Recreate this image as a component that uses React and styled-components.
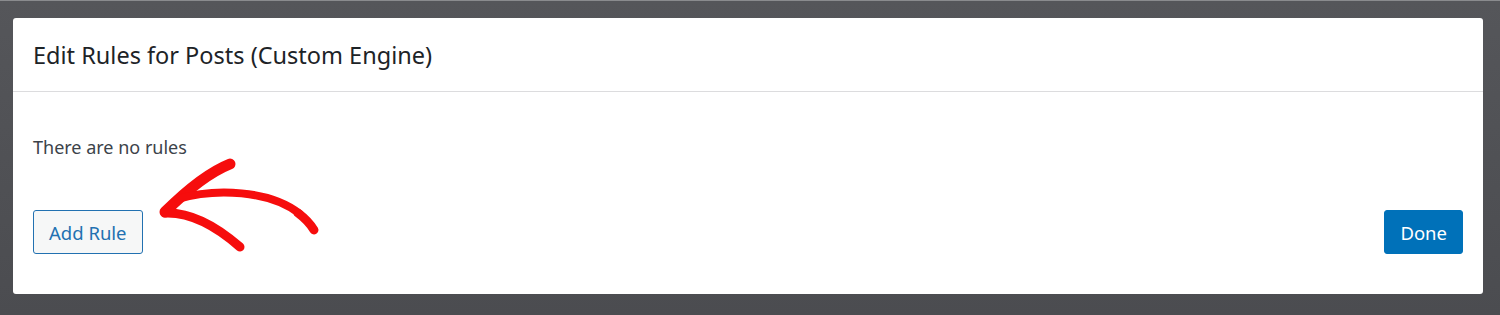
import styled, { createGlobalStyle } from "styled-components";

const GlobalStyle = createGlobalStyle`
  html, body {
    margin: 0;
    padding: 0;
    background: #505155;
  }
  body {
    font-family: "Noto Sans", "Open Sans", "Liberation Sans", sans-serif;
  }
`;

const Backdrop = styled.div`
  width: 1500px;
  height: 315px;
  box-sizing: border-box;
  padding: 17px 17px 21px 13px;
  background: linear-gradient(180deg, #55565a 0%, #4b4c50 100%);
  border-top: 1px solid #8a8b8e;
`;

const Modal = styled.div`
  position: relative;
  height: 100%;
  background: #fff;
  border-radius: 3px;
  display: flex;
  flex-direction: column;
`;

const Header = styled.div`
  height: 73px;
  display: flex;
  align-items: center;
  padding: 0 20px;
  border-bottom: 1px solid #dcdcde;
`;

const Title = styled.h2`
  margin: 0;
  font-size: 23.5px;
  font-weight: 400;
  color: #1d2327;
`;

const Body = styled.div`
  position: relative;
  flex: 1;
  padding: 43px 20px 0;
  display: flex;
  flex-direction: column;
`;

const Empty = styled.p`
  margin: 0;
  font-size: 18px;
  line-height: 24px;
  color: #3c434a;
`;

const Actions = styled.div`
  margin-top: 51px;
  display: flex;
  justify-content: space-between;
`;

const Button = styled.button`
  height: 44px;
  padding: 0 15px;
  border-radius: 3px;
  font-family: inherit;
  font-size: 18.5px;
  border: 1px solid #2271b1;
  background: ${(p) => (p.$primary ? "#0071b9" : "#f6f7f7")};
  color: ${(p) => (p.$primary ? "#fff" : "#2271b1")};
  border-color: ${(p) => (p.$primary ? "#0071b9" : "#2271b1")};
`;

const Arrow = styled.svg`
  position: absolute;
  left: 0;
  top: 0;
  pointer-events: none;
`;

const Scribble = () => (
  <Arrow width="400" height="276" viewBox="13 18 400 276">
    <g fill="none" stroke="#f60d0d" strokeLinecap="round" strokeLinejoin="round">
      <path d="M230 164 C210 172 185 192 165 212" strokeWidth="11" />
      <path d="M165 213 C190 212 215 225 240 247" strokeWidth="9" />
      <path d="M178 199 C215 188 270 190 300 214" strokeWidth="8" />
      <path d="M298 213 C306 219 311 225 314 230" strokeWidth="9" />
    </g>
  </Arrow>
);

export default function App() {
  return (
    <>
      <GlobalStyle />
      <Backdrop>
        <Modal>
          <Header>
            <Title>Edit Rules for Posts (Custom Engine)</Title>
          </Header>
          <Body>
            <Empty>There are no rules</Empty>
            <Actions>
              <Button>Add Rule</Button>
              <Button $primary>Done</Button>
            </Actions>
          </Body>
          <Scribble />
        </Modal>
      </Backdrop>
    </>
  );
}
